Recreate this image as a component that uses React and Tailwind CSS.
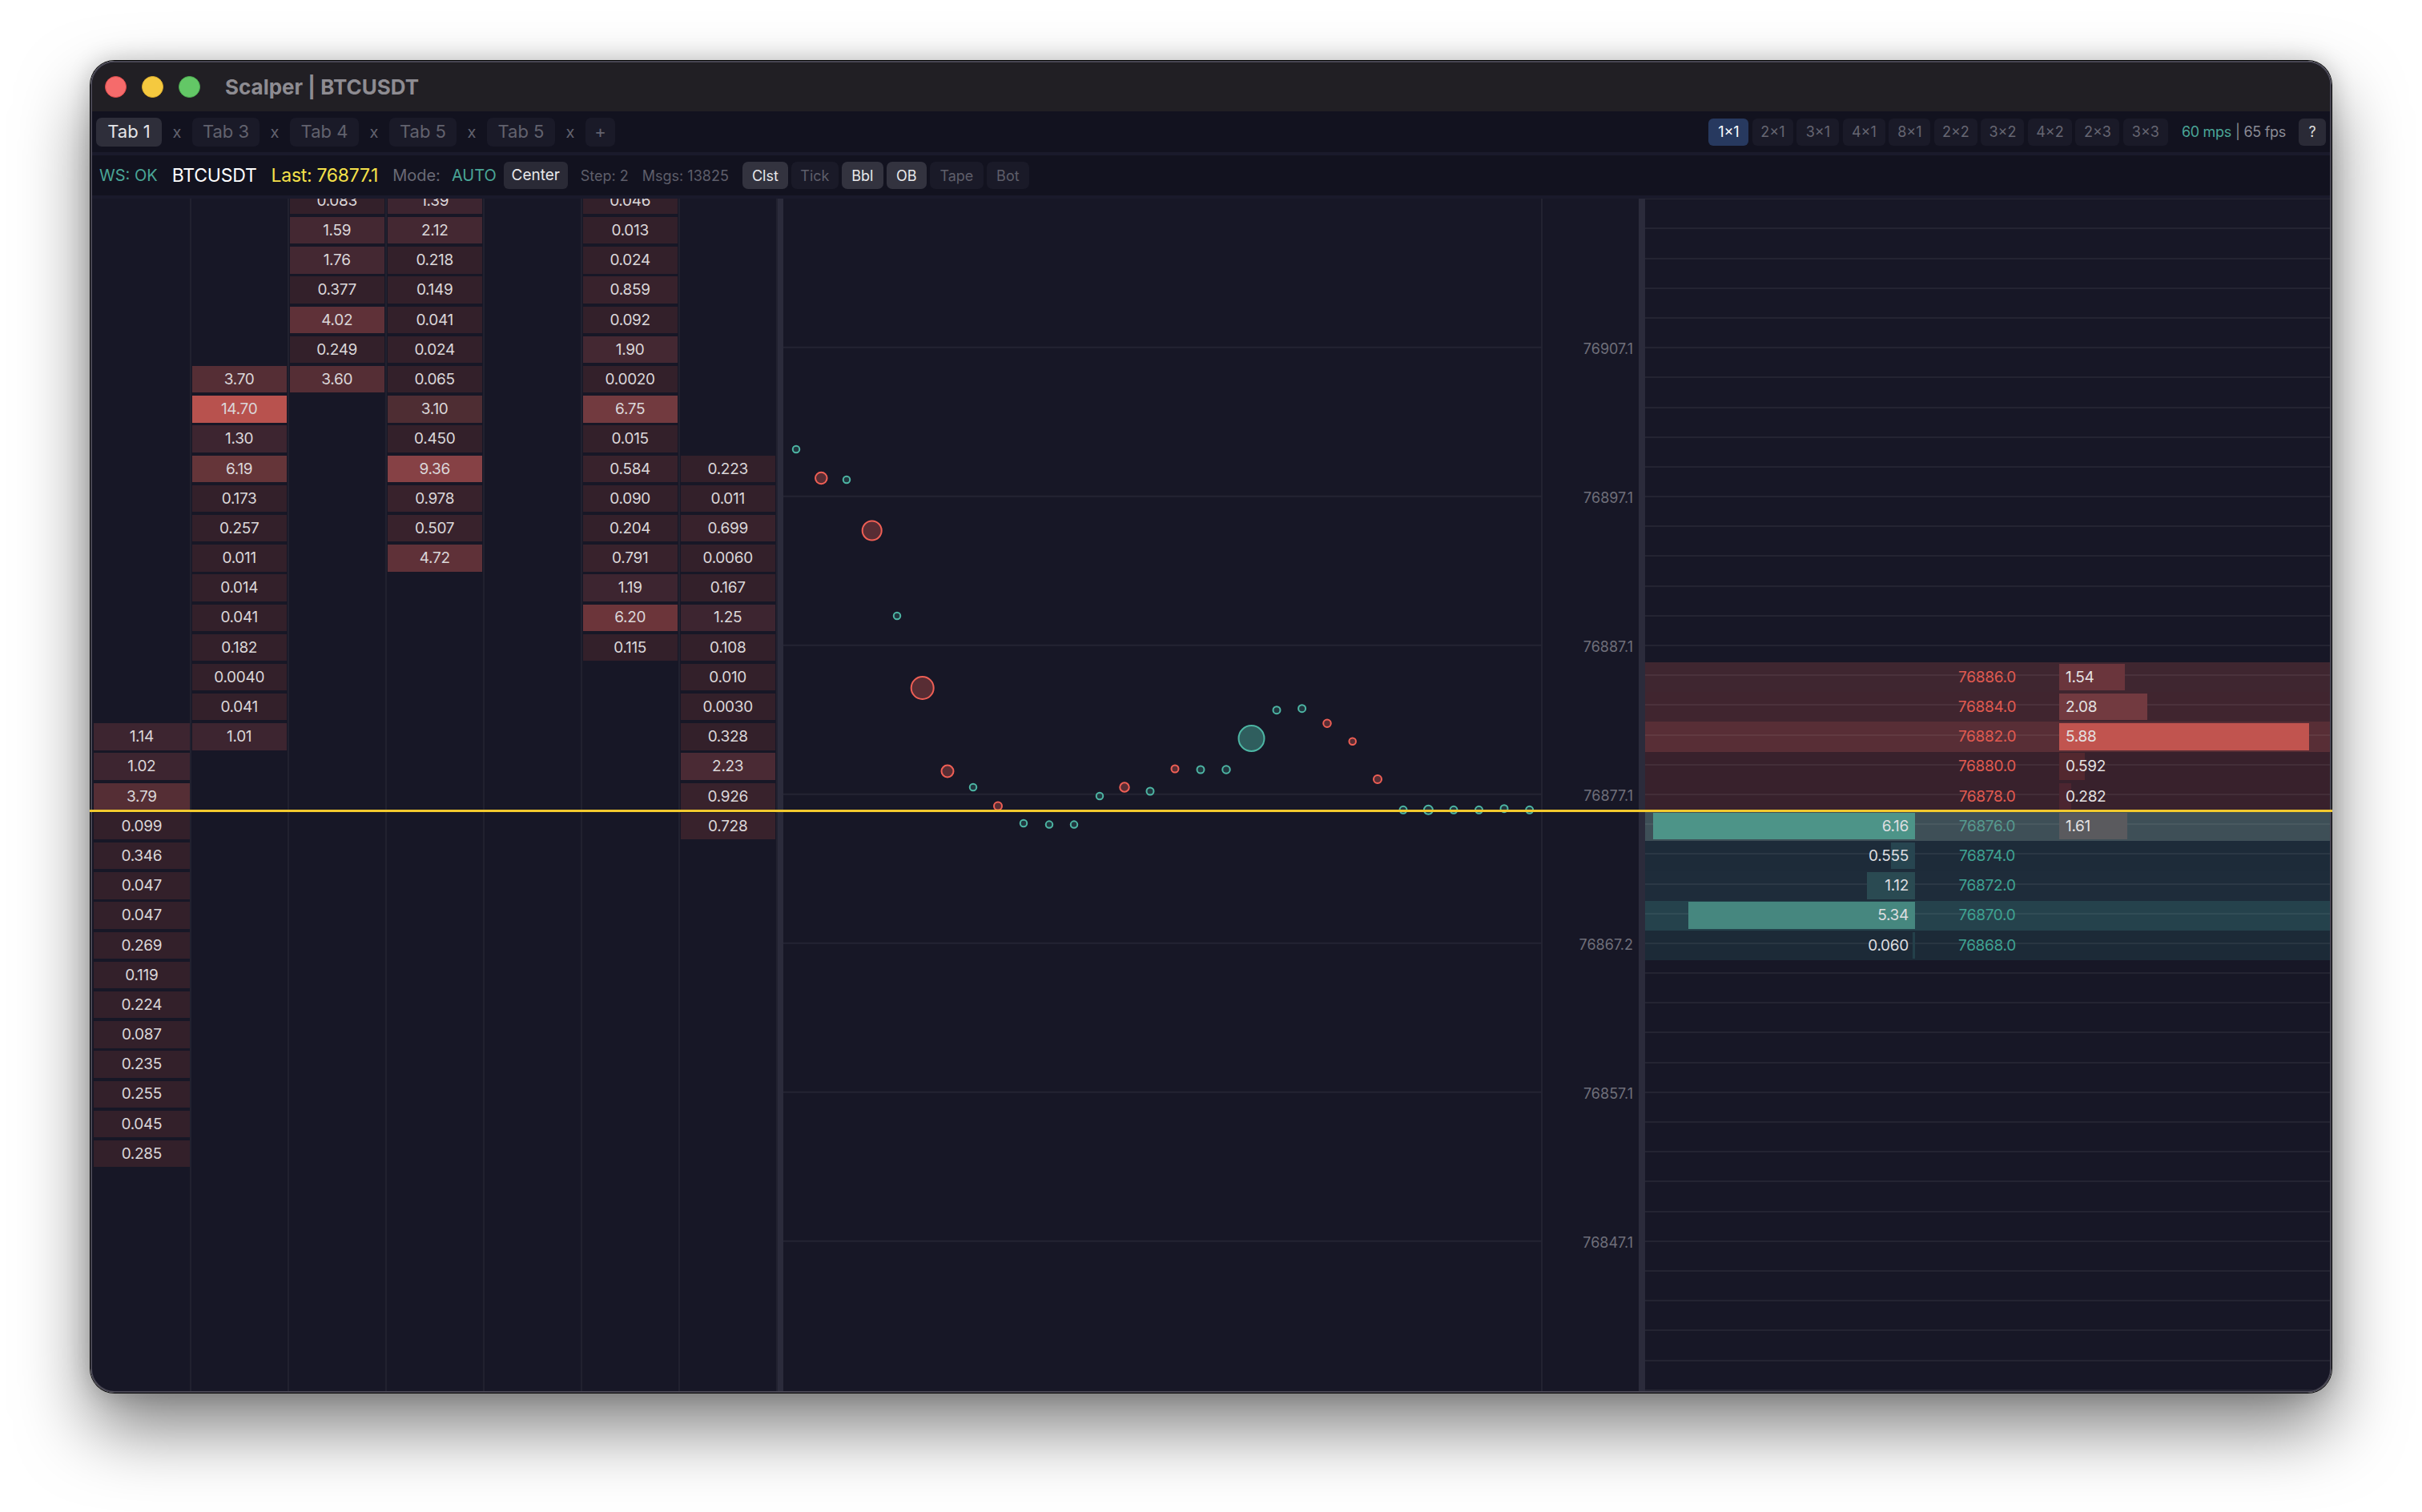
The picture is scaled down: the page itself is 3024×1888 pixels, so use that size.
import React from "react";

const ROW_COUNT = 41;
const FIRST_LINE_Y = 433.7;

const tabs = [
  { label: "Tab 1", width: "w-[82px]", active: true },
  { label: "Tab 3", width: "w-[84px]" },
  { label: "Tab 4", width: "w-[86px]" },
  { label: "Tab 5", width: "w-[84px]" },
  { label: "Tab 5", width: "w-[85px]" },
];

const layouts = [
  { label: "1x1", width: "w-[50px]", active: true },
  { label: "2x1", width: "w-[51px]" },
  { label: "3x1", width: "w-[53px]" },
  { label: "4x1", width: "w-[53px]" },
  { label: "8x1", width: "w-[52px]" },
  { label: "2x2", width: "w-[54px]" },
  { label: "3x2", width: "w-[54px]" },
  { label: "4x2", width: "w-[55px]" },
  { label: "2x3", width: "w-[55px]" },
  { label: "3x3", width: "w-[56px]" },
];

const toggles = [
  { label: "Clst", width: "w-[57px]", active: true },
  { label: "Tick", width: "w-[59px]" },
  { label: "Bbl", width: "w-[52px]", active: true },
  { label: "OB", width: "w-[50px]", active: true },
  { label: "Tape", width: "w-[67px]" },
  { label: "Bot", width: "w-[53px]" },
];

// rows of the cluster columns, start = index of the first filled row
const columns = [
  { start: 18, values: ["1.14", "1.02", "3.79", "0.099", "0.346", "0.047", "0.047", "0.269", "0.119", "0.224", "0.087", "0.235", "0.255", "0.045", "0.285"] },
  { start: 6, values: ["3.70", "14.70", "1.30", "6.19", "0.173", "0.257", "0.011", "0.014", "0.041", "0.182", "0.0040", "0.041", "1.01"] },
  { start: 0, values: ["0.083", "1.59", "1.76", "0.377", "4.02", "0.249", "3.60"] },
  { start: 0, values: ["1.39", "2.12", "0.218", "0.149", "0.041", "0.024", "0.065", "3.10", "0.450", "9.36", "0.978", "0.507", "4.72"] },
  { start: 0, values: [] },
  { start: 0, values: ["0.046", "0.013", "0.024", "0.859", "0.092", "1.90", "0.0020", "6.75", "0.015", "0.584", "0.090", "0.204", "0.791", "1.19", "6.20", "0.115"] },
  { start: 9, values: ["0.223", "0.011", "0.699", "0.0060", "0.167", "1.25", "0.108", "0.010", "0.0030", "0.328", "2.23", "0.926", "0.728"] },
];

const dots = [
  [994, 561, 9.5, "t"], [1025.3, 597, 15.5, "r"], [1057, 599, 9.5, "t"], [1088.7, 662.5, 25, "r"],
  [1120, 769, 9.5, "t"], [1151.7, 859, 29, "r"], [1183, 963, 16, "r"], [1215, 983, 9.5, "t"],
  [1246, 1006.5, 11, "r"], [1278, 1028, 9.5, "t"], [1310, 1029.6, 9.5, "t"], [1341, 1029.6, 9.5, "t"],
  [1373, 994, 9.5, "t"], [1404, 983, 12.5, "r"], [1436, 988, 10, "t"], [1467, 960, 10, "r"],
  [1499, 961, 10, "t"], [1531, 961, 10.5, "t"], [1562.5, 922, 33, "t"], [1594, 886.7, 10, "t"],
  [1625.6, 884.7, 10, "t"], [1657, 903.3, 10.5, "r"], [1688.7, 925.7, 9.5, "r"], [1720, 973, 11, "r"],
  [1752, 1011.3, 10, "t"], [1783.4, 1011.3, 12, "t"], [1815, 1011.3, 10, "t"], [1846.5, 1011.3, 10, "t"],
  [1878, 1009.7, 10, "t"], [1909.7, 1011.3, 10, "t"],
];

const axisLabels = ["76907.1", "76897.1", "76887.1", "76877.1", "76867.2", "76857.1", "76847.1"];

// order book, row = index in the same grid as the cluster columns
const book = [
  { row: 16, price: "76886.0", ask: "1.54", askBar: 82, bg: "bg-[#3f2630]", askBg: "bg-[#6a353c]" },
  { row: 17, price: "76884.0", ask: "2.08", askBar: 110, bg: "bg-[#40252f]", askBg: "bg-[#723a40]" },
  { row: 18, price: "76882.0", ask: "5.88", askBar: 312, bg: "bg-[#582e36]", askBg: "bg-[#c1544f]" },
  { row: 19, price: "76880.0", ask: "0.592", askBar: 32, bg: "bg-[#38212c]", askBg: "bg-[#53282f]" },
  { row: 20, price: "76878.0", ask: "0.282", askBar: 15, bg: "bg-[#38212c]", askBg: "bg-[#4c2530]" },
  { row: 21, price: "76876.0", ask: "1.61", askBar: 85, bid: "6.16", bidBar: 327, bg: "bg-[#3e4f57]", askBg: "bg-[#5a5a5e]", bidBg: "bg-[#4d9488]", teal: true, dim: true },
  { row: 22, price: "76874.0", bid: "0.555", bidBar: 30, bg: "bg-[#1d2b39]", bidBg: "bg-[#274550]", teal: true },
  { row: 23, price: "76872.0", bid: "1.12", bidBar: 60, bg: "bg-[#1e2c3a]", bidBg: "bg-[#2a4a52]", teal: true },
  { row: 24, price: "76870.0", bid: "5.34", bidBar: 283, bg: "bg-[#25424c]", bidBg: "bg-[#46877f]", teal: true },
  { row: 25, price: "76868.0", bid: "0.060", bidBar: 3, bg: "bg-[#1c2a37]", bidBg: "bg-[#24404a]", teal: true },
];

const shade = (v) => {
  if (v >= 12) return "bg-[#b8524e]";
  if (v >= 9) return "bg-[#864145]";
  if (v >= 6.5) return "bg-[#723a3f]";
  if (v >= 6.2) return "bg-[#6c353a]";
  if (v >= 5) return "bg-[#653539]";
  if (v >= 4) return "bg-[#5f3138]";
  if (v >= 3.3) return "bg-[#552e35]";
  if (v >= 3) return "bg-[#4e2d33]";
  if (v >= 2.2) return "bg-[#4a2a34]";
  if (v >= 1.5) return "bg-[#442832]";
  if (v >= 1) return "bg-[#3d2530]";
  if (v >= 0.5) return "bg-[#38222c]";
  return "bg-[#33202a]";
};

const ClusterColumn = ({ start, values, first }) => (
  <div className={`flex flex-col shrink-0 border-r-2 border-[#21212f] ${first ? "w-[123.7px] pl-[2px]" : "w-[122px] px-[1px]"}`}>
    {Array.from({ length: ROW_COUNT }).map((_, i) => {
      const value = values[i - start];
      return (
        <div key={i} className="h-[37.2px] shrink-0 py-[1.9px]">
          {value && (
            <div className={`h-full pt-[1px] flex items-center justify-center text-[19px] tracking-[-0.3px] text-[#dbd7d9] ${shade(parseFloat(value))}`}>
              {value}
            </div>
          )}
        </div>
      );
    })}
  </div>
);

const BookRow = ({ level }) => (
  <div className={`relative h-[37.2px] shrink-0 flex text-[19px] tracking-[-0.3px] ${level ? level.bg : ""}`}>
    <div className="absolute left-0 right-0 top-[15.2px] h-[2px] bg-white/[0.06]" />
    {level && (
      <>
        <div className="relative w-[337px] py-[1.9px]">
          {level.bid && (
            <>
              <div className={`absolute right-0 top-[1.9px] bottom-[1.9px] ${level.bidBg}`} style={{ width: level.bidBar }} />
              <div className="relative h-full pt-[1px] flex items-center justify-end pr-[8px] text-[#dedee0]">{level.bid}</div>
            </>
          )}
        </div>
        <div className={`relative w-[180px] pt-[1px] flex items-center justify-center ${level.dim ? "text-[#569a8f]" : level.teal ? "text-[#3fa392]" : "text-[#e05a50]"}`}>
          {level.price}
        </div>
        <div className="relative flex-1 py-[1.9px]">
          {level.ask && (
            <>
              <div className={`absolute left-0 top-[1.9px] bottom-[1.9px] ${level.askBg}`} style={{ width: level.askBar }} />
              <div className="relative h-full pt-[1px] flex items-center pl-[8px] text-[#e4e2e2]">{level.ask}</div>
            </>
          )}
        </div>
      </>
    )}
  </div>
);

const App = () => {
  return (
    <div className="w-[3024px] h-[1888px] bg-white pt-[76px] pl-[113px] font-['Inter',sans-serif] overflow-hidden">
      <div className="relative w-[2798px] h-[1663px] rounded-[30px] shadow-[0_0_0_1px_#000,0_44px_88px_rgba(0,0,0,0.5),0_0_30px_rgba(0,0,0,0.2)]">
        <div className="w-full h-full flex flex-col overflow-hidden rounded-[30px] border-2 border-[#474552] bg-[#171726]">
          {/* Title bar */}
          <div className="h-[61px] shrink-0 flex items-center bg-[#211f24]">
            <div className="flex gap-[18.5px] ml-[15.5px]">
              <span className="w-[27.5px] h-[27.5px] rounded-full bg-[#f56b6b] border border-[#e04c4c]" />
              <span className="w-[27.5px] h-[27.5px] rounded-full bg-[#f5c93f] border border-[#e0b02e]" />
              <span className="w-[27.5px] h-[27.5px] rounded-full bg-[#63c766] border border-[#4eae52]" />
            </div>
            <span className="ml-[31px] text-[26px] font-bold text-[#8e8c92]">Scalper | BTCUSDT</span>
          </div>

          {/* Tabs */}
          <div className="h-[51px] shrink-0 flex items-center pl-[5px] pr-[5px] bg-[#12121f] text-[22px]">
            {tabs.map((tab, i) => (
              <React.Fragment key={i}>
                <div className={`${tab.width} h-[36px] rounded-[7px] flex items-center justify-center ${tab.active ? "bg-[#2e2e3a] text-[#e5e5e8]" : "bg-[#1a1a28] text-[#62626e]"}`}>
                  {tab.label}
                </div>
                <span className="w-[38px] text-center text-[20px] text-[#62626e]">x</span>
              </React.Fragment>
            ))}
            <div className="w-[37px] h-[36px] rounded-[7px] flex items-center justify-center bg-[#1a1a28] text-[#62626e]">+</div>

            <div className="ml-auto flex items-center gap-[4.5px] text-[18px]">
              {layouts.map((item) => (
                <div key={item.label} className={`${item.width} h-[34px] rounded-[6px] flex items-center justify-center ${item.active ? "bg-[#27395f] text-white" : "bg-[#1a1a28] text-[#666672]"}`}>
                  {item.label.replace("x", "×")}
                </div>
              ))}
            </div>
            <span className="ml-[17px] text-[18px] tracking-[-0.3px] text-[#4aa596]">60 mps</span>
            <span className="ml-[5px] text-[18px] tracking-[-0.3px] text-[#8a8a94]">| 65 fps</span>
            <div className="ml-[16px] w-[34px] h-[34px] rounded-[6px] flex items-center justify-center bg-[#2a2a36] text-[18px] text-[#dddddd]">?</div>
          </div>

          {/* Toolbar */}
          <div className="h-[58px] shrink-0 flex items-center pl-[9px] border-y-4 border-[#1a1a2b] bg-[#12121f] text-[20px]">
            <span className="text-[#4aa596]">WS: OK</span>
            <span className="ml-[18px] text-[23px] tracking-[-0.2px] text-white">BTCUSDT</span>
            <span className="ml-[18px] text-[23px] tracking-[-0.3px] text-[#f5e04a]">Last: 76877.1</span>
            <span className="ml-[18px] text-[#6a6a76]">Mode:</span>
            <span className="ml-[14px] text-[#4aa596]">AUTO</span>
            <div className="ml-[9px] w-[80px] h-[34px] rounded-[6px] flex items-center justify-center bg-[#2a2a36] text-[19px] text-[#e8e8ea]">Center</div>
            <span className="ml-[16px] text-[18px] text-[#5e5e6a]">Step: 2</span>
            <span className="ml-[17px] text-[18px] text-[#5e5e6a]">Msgs: 13825</span>
            <div className="ml-[17px] flex gap-[4px] text-[18px]">
              {toggles.map((item) => (
                <div key={item.label} className={`${item.width} h-[34px] rounded-[7px] flex items-center justify-center ${item.active ? "bg-[#33333f] text-[#e8e8ea]" : "bg-[#1a1a28] text-[#5e5e6a]"}`}>
                  {item.label}
                </div>
              ))}
            </div>
          </div>

          {/* Panels */}
          <div className="flex-1 min-h-0 flex overflow-hidden">
            <div className="flex -mt-[16px]">
              {columns.map((col, i) => (
                <ClusterColumn key={i} start={col.start} values={col.values} first={i === 0} />
              ))}
            </div>
            <div className="w-[7.3px] shrink-0 bg-[#2b2b3b]" />

            {/* Trade bubbles */}
            <div className="w-[948px] shrink-0 border-r-2 border-[#232331]">
              <svg className="block w-full h-full" viewBox="978 248 946 1489" preserveAspectRatio="xMinYMin">
                {axisLabels.map((_, i) => (
                  <line key={i} x1="978" x2="1924" y1={FIRST_LINE_Y + i * 186} y2={FIRST_LINE_Y + i * 186} stroke="#242433" strokeWidth="2" />
                ))}
                {dots.map(([x, y, d, side], i) => (
                  <circle
                    key={i}
                    cx={x}
                    cy={y}
                    r={d / 2 - 0.5}
                    fill={side === "r" ? "rgba(239,95,85,0.3)" : d > 12 ? "rgba(77,182,164,0.45)" : "rgba(77,182,164,0.2)"}
                    stroke={side === "r" ? "#ef5f55" : "#4db6a4"}
                    strokeWidth="2"
                  />
                ))}
              </svg>
            </div>

            {/* Price axis */}
            <div className="w-[120px] shrink-0 flex flex-col pt-[94px] pr-[7px] text-[18px] text-[#6f6f7a]">
              {axisLabels.map((label) => (
                <div key={label} className="h-[186px] shrink-0 flex items-center justify-end">{label}</div>
              ))}
            </div>
            <div className="w-[8px] shrink-0 bg-[#2b2b3b]" />

            {/* Order book */}
            <div className="flex-1 flex flex-col -mt-[16px]">
              {Array.from({ length: ROW_COUNT }).map((_, i) => (
                <BookRow key={i} level={book.find((b) => b.row === i)} />
              ))}
            </div>
          </div>
        </div>

        {/* Last price */}
        <div className="absolute -left-[1px] -right-[1px] top-[935px] h-[2.5px] bg-[#f2c92e]" />
      </div>
    </div>
  );
};

export default App;
